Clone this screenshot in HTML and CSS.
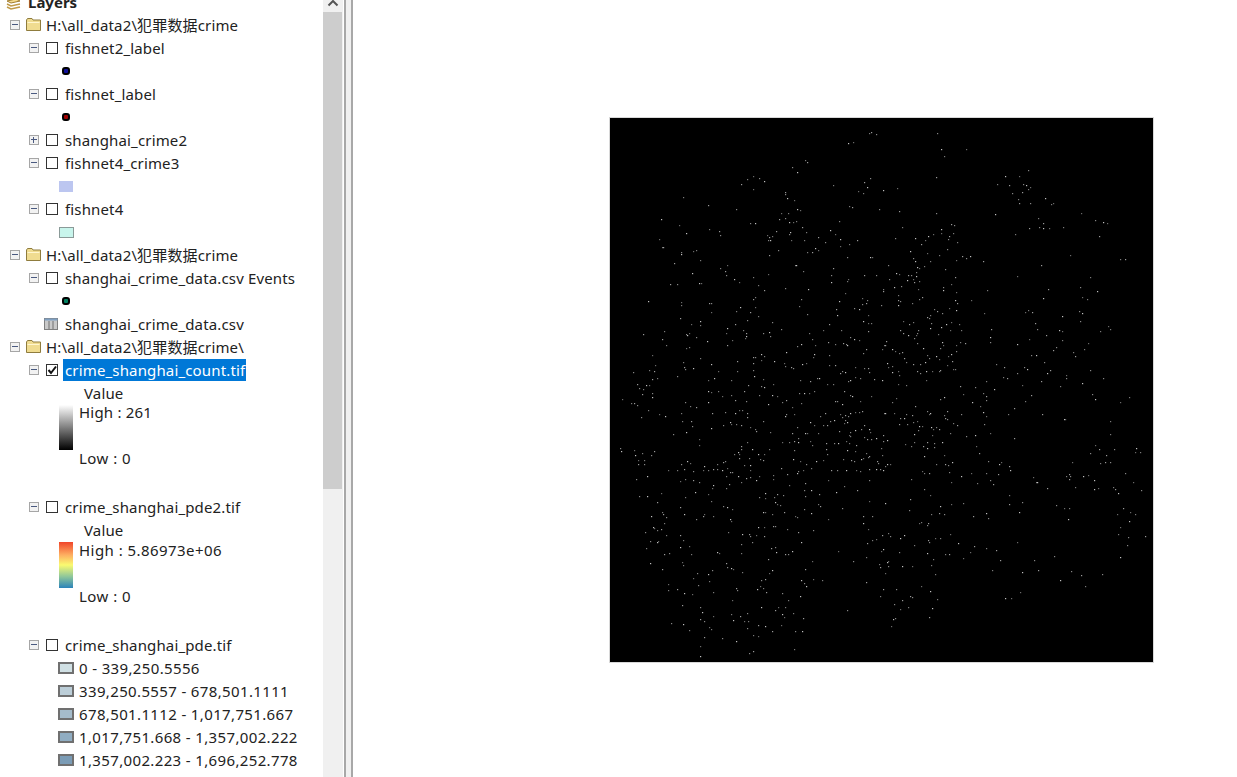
FILE: index.html
```html
<!DOCTYPE html>
<html lang="zh">
<head>
    <meta charset="UTF-8">
    <title>Layers</title>
    <link rel="stylesheet" href="styles.css">
</head>
<body>

    <div class="toc">
        <div class="tree">
            <div class="row row-title">
                <svg class="layers-icon" width="15" height="17" viewBox="0 0 15 17">
                    <path d="M1 8 L10 6 L14 8 L5 10 Z" fill="#f6dc8e" stroke="#a07c30"/>
                    <path d="M1 11 L5 13 L14 11 M1 14 L5 16 L14 14" fill="none" stroke="#c09a48" stroke-width="1.5"/>
                </svg>
                <b>Layers</b>
            </div>

            <div class="row row-group">
                <span class="exp"></span>
                <svg class="folder" width="15" height="13" viewBox="0 0 15 13"><path d="M.5 12.5 V2 L1.5 .5 H6 L7 2 H14.5 V12.5 Z" fill="#f0dc90" stroke="#8f7c3e"/><path d="M1.5 4.5 H13.5" stroke="#fff6cf"/></svg>
                <span>H:\all_data2\犯罪数据crime</span>
            </div>

            <div class="row row-layer"><span class="exp"></span><span class="check"></span><span>fishnet2_label</span></div>
            <div class="row row-symbol"><span class="point point-blue"></span></div>
            <div class="row row-layer"><span class="exp"></span><span class="check"></span><span>fishnet_label</span></div>
            <div class="row row-symbol"><span class="point point-red"></span></div>
            <div class="row row-layer"><span class="exp exp-plus"></span><span class="check"></span><span>shanghai_crime2</span></div>
            <div class="row row-layer"><span class="exp"></span><span class="check"></span><span>fishnet4_crime3</span></div>
            <div class="row row-symbol"><span class="fill fill-lilac"></span></div>
            <div class="row row-layer"><span class="exp"></span><span class="check"></span><span>fishnet4</span></div>
            <div class="row row-symbol"><span class="fill fill-mint"></span></div>

            <div class="row row-group">
                <span class="exp"></span>
                <svg class="folder" width="15" height="13" viewBox="0 0 15 13"><path d="M.5 12.5 V2 L1.5 .5 H6 L7 2 H14.5 V12.5 Z" fill="#f0dc90" stroke="#8f7c3e"/><path d="M1.5 4.5 H13.5" stroke="#fff6cf"/></svg>
                <span>H:\all_data2\犯罪数据crime</span>
            </div>
            <div class="row row-layer"><span class="exp"></span><span class="check"></span><span>shanghai_crime_data.csv Events</span></div>
            <div class="row row-symbol"><span class="point point-green"></span></div>
            <div class="row row-table">
                <svg class="table-icon" width="14" height="12" viewBox="0 0 14 12"><rect x=".5" y=".5" width="13" height="11" fill="#c9c9c9" stroke="#808080"/><path d="M.5 1.5 H13.5" stroke="#7f9fc0" stroke-width="2"/><path d="M5 3 V11 M9 3 V11" stroke="#707070"/></svg>
                <span>shanghai_crime_data.csv</span>
            </div>

            <div class="row row-group">
                <span class="exp"></span>
                <svg class="folder" width="15" height="13" viewBox="0 0 15 13"><path d="M.5 12.5 V2 L1.5 .5 H6 L7 2 H14.5 V12.5 Z" fill="#f0dc90" stroke="#8f7c3e"/><path d="M1.5 4.5 H13.5" stroke="#fff6cf"/></svg>
                <span>H:\all_data2\犯罪数据crime\</span>
            </div>

            <div class="row row-layer"><span class="exp"></span><span class="check check-on"><svg width="10" height="10" viewBox="0 0 10 10"><path d="M1.5 5 L4 8 L9 1.5" fill="none" stroke="#111" stroke-width="2"/></svg></span><span class="selected">crime_shanghai_count.tif</span></div>
            <div class="row row-value">Value</div>
            <div class="ramp">
                <span class="ramp-bar ramp-grey"></span>
                <div class="ramp-labels"><div class="label-short">High : 261</div><div>Low : 0</div></div>
            </div>

            <div class="row row-layer"><span class="exp"></span><span class="check"></span><span>crime_shanghai_pde2.tif</span></div>
            <div class="row row-value">Value</div>
            <div class="ramp ramp-pde">
                <span class="ramp-bar ramp-color"></span>
                <div class="ramp-labels"><div>High : 5.86973e+06</div><div>Low : 0</div></div>
            </div>

            <div class="row row-layer"><span class="exp"></span><span class="check"></span><span>crime_shanghai_pde.tif</span></div>
            <div class="row row-class"><span class="swatch swatch-1"></span><span>0 - 339,250.5556</span></div>
            <div class="row row-class"><span class="swatch swatch-2"></span><span>339,250.5557 - 678,501.1111</span></div>
            <div class="row row-class"><span class="swatch swatch-3"></span><span>678,501.1112 - 1,017,751.667</span></div>
            <div class="row row-class"><span class="swatch swatch-4"></span><span>1,017,751.668 - 1,357,002.222</span></div>
            <div class="row row-class"><span class="swatch swatch-5"></span><span>1,357,002.223 - 1,696,252.778</span></div>
        </div>

        <div class="scrollbar">
            <svg class="scroll-up" width="20" height="12" viewBox="0 0 20 12"><path d="M5.5 5.5 L10 1 L14.5 5.5" fill="none" stroke="#555" stroke-width="2"/></svg>
            <div class="scroll-thumb"></div>
        </div>
    </div>

    <div class="sash"></div>

    <div class="map">
        <canvas id="raster" width="543" height="544"></canvas>
    </div>

    <script src="script.js"></script>
</body>
</html>
```

FILE: styles.css
```css
body {
    margin: 0;
    height: 100vh;
    overflow: hidden;
    display: flex;
    background-color: #fff;
    font-family: "Noto Sans", "Noto Sans CJK SC", sans-serif;
    font-size: 15px;
    letter-spacing: .15px;
    color: #222;
}

/* Table of contents */
.toc {
    display: flex;
    flex: none;
}

.tree {
    width: 323px;
    margin-top: -10px;
    overflow: hidden;
}

.row {
    display: flex;
    align-items: center;
    height: 23px;
    white-space: nowrap;
}

.row-title {
    padding-left: 6px;
    gap: 7px;
    letter-spacing: 0;
}

.row-group {
    padding-left: 10px;
}

.row-group .exp {
    margin-right: 6px;
}

.row-group .folder {
    margin-right: 5px;
}

.row-layer {
    padding-left: 29px;
}

.row-layer .exp {
    margin-right: 7px;
}

.row-symbol {
    padding-left: 59px;
}

.row-table {
    padding-left: 44px;
    gap: 7px;
}

.row-value {
    padding-left: 84px;
}

.row-class {
    padding-left: 58px;
    gap: 5px;
    letter-spacing: .36px;
}

.exp {
    position: relative;
    flex: none;
    width: 8px;
    height: 8px;
    border: 1px solid #a6a6a6;
    background-color: #f2f2f2;
}

.exp::before {
    content: "";
    position: absolute;
    left: 1px;
    top: 3px;
    width: 6px;
    height: 1px;
    background-color: #4a5a80;
}

.exp-plus::after {
    content: "";
    position: absolute;
    left: 3px;
    top: 1px;
    width: 1px;
    height: 6px;
    background-color: #4a5a80;
}

.check {
    flex: none;
    display: flex;
    align-items: center;
    justify-content: center;
    width: 10px;
    height: 10px;
    margin-right: 7px;
    border: 1px solid #333;
}

.selected {
    margin-left: -2px;
    padding: 0 1px 0 2px;
    line-height: 22px;
    background-color: #0078d7;
    color: #fff;
}

/* Legend symbols */
.point {
    width: 8px;
    height: 8px;
    margin-left: 3px;
    margin-top: 1px;
    box-sizing: border-box;
    border: 2px solid #000;
    border-radius: 3px;
}

.point-blue {
    background-color: #10109a;
}

.point-red {
    background-color: #a00000;
}

.point-green {
    background-color: #008060;
}

.fill {
    box-sizing: border-box;
    height: 11px;
    margin-top: 2px;
}

.fill-lilac {
    width: 14px;
    background-color: #bcc6f0;
}

.fill-mint {
    width: 15px;
    background-color: #c8f5ec;
    border: 1px solid #8a9a98;
}

.ramp {
    display: flex;
    height: 69px;
    margin-top: -3px;
    margin-bottom: 25px;
    padding-left: 59px;
    letter-spacing: .45px;
}

.ramp-pde {
    margin-top: -2px;
}

.ramp-bar {
    width: 14px;
    height: 45px;
    margin-top: 4px;
    margin-right: 6px;
}

.ramp-grey {
    background: linear-gradient(#fff, #000);
}

.ramp-color {
    height: 46px;
    margin-top: 3px;
    background: linear-gradient(#f0452a, #fdae61 28%, #fafa70 50%, #8fc79a 75%, #2b83ba);
}

.ramp-labels {
    display: flex;
    flex-direction: column;
    justify-content: space-between;
    line-height: 23px;
}

.label-short {
    letter-spacing: .2px;
}

.swatch {
    flex: none;
    box-sizing: border-box;
    width: 16px;
    height: 12px;
    border: 2px solid #707070;
}

.swatch-1 { background-color: #d0e0e4; }
.swatch-2 { background-color: #bcced8; }
.swatch-3 { background-color: #a5bccb; }
.swatch-4 { background-color: #90adc2; }
.swatch-5 { background-color: #7b9cb6; }

/* Scrollbar and sash */
.scrollbar {
    width: 20px;
    background-color: #f0f0f0;
}

.scroll-up {
    display: block;
}

.scroll-thumb {
    width: 19px;
    height: 477px;
    background-color: #cdcdcd;
}

.sash {
    flex: none;
    width: 5px;
    margin-left: 1px;
    background-color: #f0f0f0;
    border-left: 2px solid #a8a8a8;
    border-right: 2px solid #a8a8a8;
}

/* Map view */
.map {
    flex: 1;
    padding: 117px 0 0 256px;
}

#raster {
    display: block;
    background-color: #000;
    border: 1px solid #d8d8d8;
}
```

FILE: script.js
```js
// puntos leidos del raster, en cuadrantes (x, y de cada uno a escala 3x)
var quadrants = [
    { ox: 600, oy: 110, pts: "808,70 813,66 828,72 744,99 759,96 615,150 621,155 576,171 591,186 460,198 441,207 423,222 477,204 492,213 460,237 699,225 793,216 810,204 801,231 774,243 789,249 555,246 555,252 561,264 582,270 249,261 324,285 408,297 591,297 599,300 747,288 756,291 838,297 183,327 237,345 327,357 357,363 360,375 258,369 177,387 186,411 189,411 450,339 465,339 543,309 564,309 537,327 555,324 567,336 579,336 588,333 606,351 717,333 690,360 705,372 618,366 528,363 567,372 570,366 501,375 516,378 507,381 504,390 510,390 573,390 612,390 654,381 675,396 720,387 720,408 747,402 771,390 534,420 645,414 654,420 621,426 636,426 243,426 243,432 280,423 289,420 507,435 741,441 810,441 816,441 300,450 222,459 585,465 588,465 381,465 360,474 375,483 378,495 276,489 504,492 609,483 699,474 693,495 693,516 744,507 741,513 792,495 828,495 403,507 417,516 459,501 210,522 231,522 297,519 303,519 474,525 492,540 555,534 624,537 735,549 465,561 459,567 603,567 717,573 786,564 801,570 798,579 786,582 144,573 243,576 243,585 327,579 333,579 420,591 465,591 597,588 708,597 762,594 777,597 333,606 408,603 450,606 621,612 711,615 804,615 474,618 240,624 516,636 300,633 273,642 300,645 405,642 441,630 789,633 804,639 813,639 687,642 543,657 381,654 378,669 192,663 129,672 258,672 261,675 267,669 429,660 438,669 489,669 507,666 669,660 723,660 804,663 510,678 438,678 435,684 627,669 186,687 288,681 321,693 396,690 636,687 684,696 750,681 762,687 777,690 198,705 381,705 591,708 603,702 645,705 705,702 729,699 738,702 741,705 258,714 267,711 798,717 789,729 558,726 156,735 300,744 459,741 465,741 483,732 483,750 492,738 411,753 687,735 642,732 639,741 250,756 252,771 255,777 279,774 165,765 147,780 162,783 99,786 333,762 354,783 411,783 459,759 459,780 522,753 552,759 555,768 573,771 579,774 606,762 618,759 687,765 705,765 726,783 735,786 765,771 792,774 804,774 808,786 462,798 489,807 171,804 156,807 231,798 342,804 324,810 393,810 111,822 117,833 138,825 147,825 129,837 444,825 483,828 492,831 519,822 600,810 630,813 651,804 657,804 681,822 699,822 720,789 744,813 750,810 765,801 780,804 822,807" },
    { ox: 880, oy: 110, pts: "171,69 183,117 258,117 192,138 168,201 444,180 375,198 417,198 351,222 387,225 429,222 438,225 450,231 444,237 426,246 396,249 9,240 51,234 414,267 417,279 450,279 495,264 519,279 513,282 57,303 168,309 345,312 603,309 474,324 489,339 645,330 669,336 681,339 66,351 447,354 477,351 489,354 507,354 549,351 213,342 222,345 183,357 183,369 219,369 207,378 204,387 144,378 159,372 405,372 657,378 45,384 105,384 135,390 231,396 123,402 201,417 90,423 141,429 177,435 246,438 258,444 270,438 570,435 720,447 735,447 99,444 105,453 228,450 150,453 309,453 24,465 111,471 117,474 132,468 483,465 195,477 48,489 57,492 108,486 84,495 93,495 108,498 411,498 630,501 225,501 27,507 81,510 99,507 117,513 102,516 63,528 42,531 114,537 9,537 9,543 189,531 189,540 213,522 321,540 504,537 600,531 651,543 228,546 54,555 126,561 117,567 489,564 606,561 621,567 54,570 60,573 225,570 273,570 96,579 231,579 3,585 54,585 207,594 162,597 171,603 186,609 228,600 435,606 444,600 456,606 597,603 606,609 312,609 150,615 141,621 147,624 546,618 69,633 99,636 87,642 153,639 198,642 213,636 237,642 465,639 600,633 183,651 684,648 690,657 60,660 114,660 150,654 210,660 243,660 333,657 471,657 537,660 546,663 660,663 69,669 111,669 84,675 108,675 174,672 498,675 102,684 330,681 447,687 546,690 18,693 111,699 186,696 189,705 240,696 255,699 330,696 411,702 624,699 12,705 15,705 180,714 129,714 228,705 612,717 519,720 528,711 36,717 45,723 57,729 66,726 228,723 213,732 204,738 579,726 585,738 453,735 468,735 6,717 141,735 72,744 147,744 168,738 177,747 78,756 216,753 492,756 21,759 24,771 36,768 99,762 120,762 135,756 201,765 348,762 372,771 432,771 441,777 219,777 225,777 510,780 630,780 36,786 54,783 57,795 111,783 120,789 138,783 156,783 177,783 180,780 411,789 501,789 558,795 369,801 381,804 558,804 6,810 138,810 318,813 483,813 669,804 606,819 54,822 78,825 240,828 285,831 342,837 426,825 540,828" },
    { ox: 600, oy: 390, pts: "126,12 156,9 156,21 66,27 93,39 102,39 111,45 324,3 333,6 354,3 432,3 477,15 516,15 531,18 546,36 558,30 597,9 612,9 627,9 642,3 732,3 750,15 756,18 813,18 270,48 288,51 255,36 324,36 366,18 393,15 405,30 438,33 504,42 576,51 603,39 705,33 711,33 726,42 780,33 144,60 336,69 375,66 405,69 417,60 426,60 441,69 558,72 555,78 582,72 660,78 675,69 123,81 195,78 177,72 243,69 441,81 489,93 630,96 642,105 669,105 681,105 690,93 702,90 720,72 726,81 735,75 744,78 750,69 765,66 777,66 786,63 735,90 741,96 732,99 246,93 273,93 276,108 390,96 393,102 408,102 423,105 369,105 333,114 450,111 465,117 468,123 219,132 258,126 297,147 510,126 576,129 591,111 615,129 621,129 654,129 717,123 750,126 765,120 747,135 750,138 792,105 783,117 807,117 810,126 792,141 801,147 813,147 828,144 297,165 441,156 423,168 423,177 456,177 546,156 567,156 582,153 594,144 594,156 630,153 636,165 678,159 702,159 714,159 738,153 747,159 768,165 60,174 63,183 102,180 126,189 162,183 153,195 105,195 114,210 132,210 114,222 132,222 414,186 417,192 402,192 417,204 447,204 474,192 492,192 480,207 489,210 582,180 580,207 600,213 507,177 678,177 681,192 741,180 765,183 798,189 807,198 243,222 261,213 270,219 351,222 369,216 375,213 450,225 450,240 432,225 543,234 618,222 648,213 669,210 729,207 753,210 762,213 783,207 789,204 804,201 831,213 834,219 828,237 204,240 231,240 252,237 279,243 312,228 309,240 324,240 339,237 351,237 366,240 381,234 378,258 390,246 396,246 414,258 477,258 519,255 561,252 594,243 591,249 609,240 633,234 693,240 711,240 738,240 768,240 780,243 807,237 108,267 141,258 240,273 255,267 279,270 297,276 339,285 336,294 423,276 438,264 450,261 468,270 519,267 567,285 615,279 612,300 633,300 684,270 732,288 771,300 807,270 285,306 324,312 378,294 387,282 117,318 141,318 183,309 255,321 171,336 477,321 495,309 495,324 522,321 531,312 549,315 525,336 531,342 540,345 657,312 615,318 708,306 807,333 333,333 240,351 369,348 381,351 396,357 654,342 660,348 726,354 489,366 495,366 516,372 552,366 612,357 633,369 684,387 186,366 189,372 198,381 252,372 312,372 339,378 309,378 288,387 153,378 585,378 591,381 789,378 816,378 390,387 393,393 192,399 519,408 525,408 160,411 163,414 171,420 183,417 135,426 475,411 492,411 384,426 447,432 450,438 426,432 468,435 561,417 594,426 639,420 789,399 804,417 198,435 240,435 150,453 171,456 174,453 249,450 492,438 456,456 603,456 828,447 816,450 801,459 423,462 240,471 267,468 138,474 513,474 525,471 528,486 714,483 273,492 192,492 207,489 351,486 357,489 423,489 555,492 564,492 576,483 636,513 798,501 504,507 759,513 150,519 246,516 249,525 378,519 381,531 393,534 399,537 837,522 186,537 336,540 516,540 507,549 426,546 615,537 291,549 324,552 279,564 327,573 495,567 483,570 604,570 639,567 666,570 798,576 612,579 618,588 204,582 204,600 231,597 294,585 252,609 276,612 339,606 409,594 411,600 471,597 480,588 489,594 498,606 546,609 600,618 396,630 564,630 246,645 300,651 483,651 534,651 555,651 525,660 741,660 306,666 339,678 393,672 420,678 441,669 546,672 552,681 579,669 300,687 312,693 399,690 432,693 444,693 609,684 213,699 249,702 327,711 333,717 474,705 441,714 495,708 543,705 267,720 516,723 585,723 606,723 474,738 459,735 312,741 366,744 408,753 300,768 582,777 459,783 448,790 300,798" },
    { ox: 880, oy: 390, pts: "48,24 36,36 105,48 180,27 192,21 249,12 309,9 318,18 318,30 276,36 300,48 435,33 453,15 636,12 645,27 720,36 747,21 403,54 12,69 15,69 42,69 78,72 96,75 141,63 150,69 147,72 192,75 201,63 243,72 309,66 318,78 384,72 486,72 60,84 72,84 111,93 99,96 195,84 201,87 552,87 555,87 690,93 57,102 81,102 117,108 126,108 219,99 231,105 312,102 153,111 159,117 168,111 177,117 114,120 102,132 156,135 210,129 9,135 258,138 285,135 330,129 690,132 402,144 9,153 21,150 75,162 102,156 141,156 162,159 186,156 645,165 93,168 129,168 162,171 141,174 288,168 3,174 657,177 702,177 768,174 766,186 780,186 297,189 630,189 132,198 192,195 6,195 678,195 324,213 216,216 576,216 660,219 675,216 690,216 21,222 30,222 168,222 195,222 204,225 357,222 363,216 15,228 387,228 0,237 9,240 126,243 132,249 147,249 207,246 390,240 273,249 318,249 354,252 735,249 243,258 459,261 558,258 567,252 570,258 609,258 624,255 93,267 567,267 330,270 642,270 213,276 291,279 339,282 468,276 471,276 759,276 585,291 501,294 132,297 642,297 654,294 699,291 705,297 783,300 714,309 150,315 387,315 90,327 426,336 15,339 213,342 249,339 387,342 528,345 180,348 552,354 567,354 729,354 87,360 417,366 750,366 153,372 177,369 192,372 318,369 711,372 765,372 279,378 324,384 564,387 117,399 123,396 144,399 141,405 747,393 720,411 24,429 6,435 30,438 72,435 210,432 714,432 795,438 744,441 60,444 165,444 180,444 144,450 147,456 234,459 411,456 102,465 282,468 741,465 9,477 3,483 318,474 348,480 57,486 141,489 270,486 195,492 207,492 522,498 720,501 249,504 159,507 360,510 462,510 21,516 24,513 153,525 0,531 24,528 66,528 96,528 336,540 474,540 573,543 426,546 14,549 165,552 603,555 666,552 540,570 123,588 615,588 9,597 48,597 150,603 420,606 0,618 90,618 96,621 375,624 393,624 171,627 66,630 42,642 156,654 60,657 84,651 147,681 45,684 39,687 33,708" }
];

var canvas = document.getElementById('raster');
var ctx = canvas.getContext('2d');
var shades = ['#7a7a7a', '#9a9a9a', '#868686', '#c0c0c0', '#6a6a6a'];
var count = 0;

quadrants.forEach(function (q) {
    q.pts.split(' ').forEach(function (p) {
        var xy = p.split(',');
        var x = Math.round(q.ox + xy[0] / 3) - 610;
        var y = Math.round(q.oy + xy[1] / 3) - 118;
        ctx.fillStyle = shades[count % shades.length];
        ctx.fillRect(x, y, 1.2, 1.2);
        count++;
    });
});
```
